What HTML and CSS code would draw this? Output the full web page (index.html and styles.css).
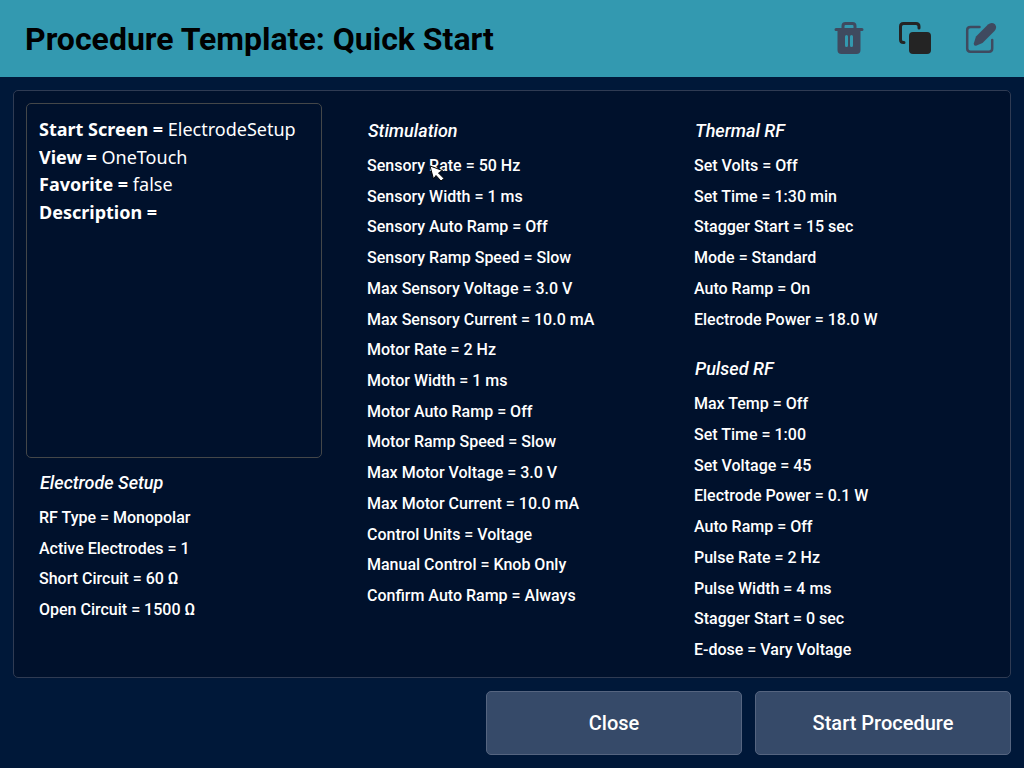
FILE: index.html
```html
<!DOCTYPE html>
<html lang="en">
<head>
<meta charset="utf-8">
<meta name="viewport" content="width=device-width, initial-scale=1">
<title>Procedure Template: Quick Start</title>
<link rel="stylesheet" href="styles.css">
</head>
<body>
<header class="header">
  <h1 class="title">Procedure Template: Quick Start</h1>
  <div class="tools">
    <button class="tool" type="button" aria-label="Delete">
      <svg viewBox="0 0 34 34" width="34" height="34" aria-hidden="true">
        <path fill="none" stroke="#3f4a5f" stroke-width="3" d="M11 8V6Q11 3.500 13.500 3.500h7Q23 3.500 23 6V8"/>
        <path fill="#3f4a5f" fill-rule="evenodd" d="M4 8h26a1.500 1.500 0 0 1 0 3H28.500V30q0 4-4 4h-15q-4 0-4-4V11H4a1.500 1.500 0 0 1 0-3ZM14.500 15a1.500 1.500 0 0 0-1.500 1.500v9a1.500 1.500 0 0 0 3 0v-9a1.500 1.500 0 0 0-1.500-1.500ZM19.500 15a1.500 1.500 0 0 0-1.500 1.500v9a1.500 1.500 0 0 0 3 0v-9a1.500 1.500 0 0 0-1.500-1.500Z"/>
      </svg>
    </button>
    <button class="tool" type="button" aria-label="Duplicate">
      <svg viewBox="0 0 34 34" width="34" height="34" aria-hidden="true">
        <path fill="none" stroke="#242424" stroke-width="3" stroke-linecap="round" d="M6 22.500H5.500Q2.500 22.500 2.500 19.500V6.500Q2.500 3.500 5.500 3.500H18Q21 3.500 21 6.500V8"/>
        <rect x="11" y="12" width="22" height="22" rx="4" fill="#242424"/>
      </svg>
    </button>
    <button class="tool" type="button" aria-label="Edit">
      <svg viewBox="0 0 34 34" width="34" height="34" aria-hidden="true">
        <path fill="none" stroke="#3f4a5f" stroke-width="2.500" stroke-linecap="round" d="M15.500 7H6.500Q3.200 7 3.200 10V28.500Q3.200 31.700 6.500 31.700H25Q28.200 31.700 28.200 28.500V20"/>
        <path fill="#3f4a5f" d="M24 4.500Q27.500 1.500 31 4.200Q33.500 7.500 30.500 11L18.500 23L12 25.800Q9.500 26 9.800 23.500L12 16.500Z"/>
      </svg>
    </button>
  </div>
</header>
<main class="panel">
  <div class="column">
    <section class="summary">
      <p><b>Start Screen =</b> ElectrodeSetup</p>
      <p><b>View =</b> OneTouch</p>
      <p><b>Favorite =</b> false</p>
      <p><b>Description =</b></p>
    </section>
    <section class="group">
      <h2 class="group-title">Electrode Setup</h2>
      <ul class="settings">
        <li>RF Type = Monopolar</li>
        <li>Active Electrodes = 1</li>
        <li>Short Circuit = 60 Ω</li>
        <li>Open Circuit = 1500 Ω</li>
      </ul>
    </section>
  </div>
  <div class="column column-inset">
    <section class="group">
      <h2 class="group-title">Stimulation</h2>
      <ul class="settings">
        <li>Sensory <span class="hovered">Rate<svg class="cursor" viewBox="0 0 16 18" width="16" height="18" aria-hidden="true"><path fill="#fff" stroke="#000" stroke-width="1" d="M1 1L13.500 5.500L9.500 8L15 13.500L12 16L7 10.500L4.500 14Z"/></svg></span> = 50 Hz</li>
        <li>Sensory Width = 1 ms</li>
        <li>Sensory Auto Ramp = Off</li>
        <li>Sensory Ramp Speed = Slow</li>
        <li>Max Sensory Voltage = 3.0 V</li>
        <li>Max Sensory Current = 10.0 mA</li>
        <li>Motor Rate = 2 Hz</li>
        <li>Motor Width = 1 ms</li>
        <li>Motor Auto Ramp = Off</li>
        <li>Motor Ramp Speed = Slow</li>
        <li>Max Motor Voltage = 3.0 V</li>
        <li>Max Motor Current = 10.0 mA</li>
        <li>Control Units = Voltage</li>
        <li>Manual Control = Knob Only</li>
        <li>Confirm Auto Ramp = Always</li>
      </ul>
    </section>
  </div>
  <div class="column column-inset">
    <section class="group">
      <h2 class="group-title">Thermal RF</h2>
      <ul class="settings">
        <li>Set Volts = Off</li>
        <li>Set Time = 1:30 min</li>
        <li>Stagger Start = 15 sec</li>
        <li>Mode = Standard</li>
        <li>Auto Ramp = On</li>
        <li>Electrode Power = 18.0 W</li>
      </ul>
    </section>
    <section class="group">
      <h2 class="group-title">Pulsed RF</h2>
      <ul class="settings">
        <li>Max Temp = Off</li>
        <li>Set Time = 1:00</li>
        <li>Set Voltage = 45</li>
        <li>Electrode Power = 0.1 W</li>
        <li>Auto Ramp = Off</li>
        <li>Pulse Rate = 2 Hz</li>
        <li>Pulse Width = 4 ms</li>
        <li>Stagger Start = 0 sec</li>
        <li>E-dose = Vary Voltage</li>
      </ul>
    </section>
  </div>
</main>
<footer class="actions">
  <button class="action" type="button">Close</button>
  <button class="action" type="button">Start Procedure</button>
</footer>
</body>
</html>
```
FILE: styles.css
```css
* {
  box-sizing: border-box;
}

body {
  display: flex;
  flex-direction: column;
  min-height: 100vh;
  margin: 0;
  background: #001839;
  color: #fff;
  font-family: Roboto, "Liberation Sans", sans-serif;
  font-size: 16px;
}

h1, h2, p, ul {
  margin: 0;
  padding: 0;
}

.header {
  display: flex;
  align-items: center;
  justify-content: space-between;
  min-height: 77px;
  padding: 0 26px 0 25px;
  background: #3399b0;
  color: #000;
}

.title {
  font-size: 32px;
  font-weight: 700;
}

.tools {
  display: flex;
  gap: 32px;
  padding-bottom: 4px;
}

.tool {
  padding: 0;
  border: 0;
  background: none;
  cursor: pointer;
}

.tool svg {
  display: block;
}

.panel {
  flex: 1;
  display: grid;
  grid-template-columns: 296fr 302fr 312fr;
  gap: 25px;
  margin: 13px 13px 0;
  padding: 12px 24px 8px 12px;
  border: 1px solid #2f3b53;
  border-radius: 5px;
  background: #00112c;
}

.column {
  display: flex;
  flex-direction: column;
  gap: 9px;
}

.column-inset {
  gap: 18px;
  padding: 12px 0 0 7px;
}

.summary {
  min-height: 355px;
  padding: 12px;
  border: 1px solid #444749;
  border-radius: 5px;
  font-family: "Noto Sans", sans-serif;
  font-size: 18px;
  line-height: 1.53;
}

.group {
  padding: 0 13px;
}

.group-title {
  margin-bottom: 4px;
  padding-left: 1px;
  font-size: 18px;
  font-style: italic;
  font-weight: 500;
  line-height: 32px;
}

.settings {
  list-style: none;
  font-weight: 500;
  line-height: 1.92;
}

.hovered {
  position: relative;
}

.cursor {
  position: absolute;
  top: 9px;
  left: 0;
}

.actions {
  display: flex;
  justify-content: flex-end;
  gap: 13px;
  padding: 13px;
}

.action {
  width: 256px;
  height: 64px;
  border: 1px solid #566580;
  border-radius: 5px;
  background: #364a69;
  color: #fff;
  font: inherit;
  font-size: 20px;
  font-weight: 500;
  cursor: pointer;
}
```
